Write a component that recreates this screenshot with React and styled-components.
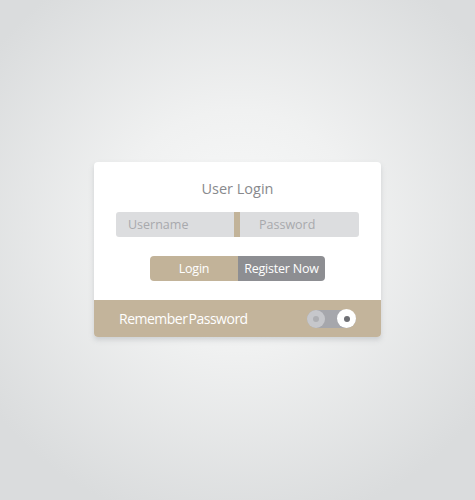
import React from "react";
import styled, { createGlobalStyle } from "styled-components";

const Global = createGlobalStyle`
  html, body { margin: 0; padding: 0; }
  *, *::before, *::after { box-sizing: border-box; }
  body {
    height: 500px;
    overflow: hidden;
    background: radial-gradient(ellipse 64% 60% at 50% 46%, #f8f9f9 0%, #f0f1f1 40%, #dadcdd 100%);
    font-family: "Open Sans", "Liberation Sans", sans-serif;
  }
`;

const Page = styled.div`
  display: flex;
  justify-content: center;
  padding-top: 162px;
`;

const Card = styled.div`
  width: 287px;
  background: #ffffff;
  border-radius: 4px;
  overflow: hidden;
  box-shadow: 0 3px 5px rgba(150, 155, 160, 0.35);
`;

const Body = styled.div`
  display: flex;
  flex-direction: column;
  align-items: center;
  padding: 17px 22px 19px;
`;

const Title = styled.h1`
  margin: 0;
  font-size: 14.5px;
  line-height: 20px;
  font-weight: 400;
  color: #88898d;
`;

const Fields = styled.div`
  display: flex;
  width: 100%;
  margin-top: 13px;
  height: 25px;
`;

const Field = styled.div`
  width: ${(p) => p.$w}px;
  background: #dcdddf;
  border-radius: ${(p) => (p.$left ? "3px 0 0 3px" : "0 3px 3px 0")};
  display: flex;
  align-items: center;
  padding-left: ${(p) => p.$pad}px;
  font-size: 12.5px;
  color: #a8a9ad;
`;

const Divider = styled.div`
  width: 6px;
  background: #c2b399;
`;

const Buttons = styled.div`
  display: flex;
  margin-top: 19px;
  width: 175px;
  height: 25px;
  border-radius: 4px;
  overflow: hidden;
`;

const Button = styled.div`
  width: ${(p) => p.$w}px;
  display: flex;
  align-items: center;
  justify-content: center;
  font-size: 12.5px;
  letter-spacing: -0.2px;
  color: #ffffff;
  background: ${(p) => p.$bg};
`;

const Footer = styled.div`
  height: 37px;
  background: #c3b49b;
  display: flex;
  align-items: center;
  justify-content: space-between;
  padding: 0 25px;
`;

const FooterText = styled.span`
  color: #ffffff;
  font-size: 14px;
  letter-spacing: -0.5px;
  word-spacing: -2px;
`;

const Toggle = styled.div`
  width: 49px;
  height: 18px;
  border-radius: 9px;
  background: #a6a7ac;
  display: flex;
  align-items: center;
  justify-content: space-between;
`;

const Knob = styled.div`
  width: ${(p) => p.$size}px;
  height: ${(p) => p.$size}px;
  border-radius: 50%;
  background: ${(p) => p.$bg};
  display: flex;
  align-items: center;
  justify-content: center;
  &::after {
    content: "";
    width: 6px;
    height: 6px;
    border-radius: 50%;
    background: ${(p) => p.$dot};
  }
`;

export default function App() {
  return (
    <>
      <Global />
      <Page>
        <Card>
          <Body>
            <Title>User Login</Title>
            <Fields>
              <Field $w={118} $pad={12} $left>Username</Field>
              <Divider />
              <Field $w={119} $pad={19}>Password</Field>
            </Fields>
            <Buttons>
              <Button $w={88} $bg="#c2b399">Login</Button>
              <Button $w={87} $bg="#8d8e92">Register Now</Button>
            </Buttons>
          </Body>
          <Footer>
            <FooterText>Remember Password</FooterText>
            <Toggle>
              <Knob $size={18} $bg="#c6c7cb" $dot="#aeafb3" />
              <Knob $size={19} $bg="#ffffff" $dot="#6e6f74" />
            </Toggle>
          </Footer>
        </Card>
      </Page>
    </>
  );
}
